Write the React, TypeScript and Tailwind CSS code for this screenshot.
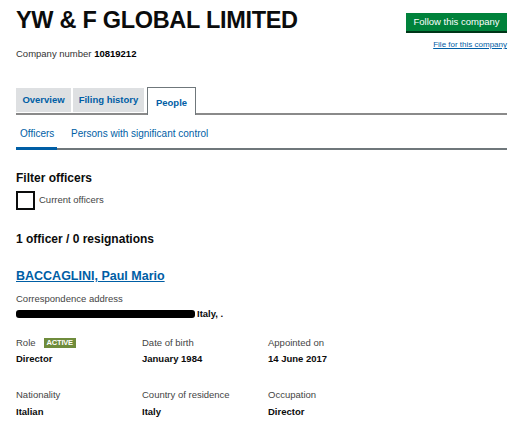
import React from 'react';

const font = { fontFamily: '"Liberation Sans", Arial, sans-serif' };

function Field({ label, value, badge }: { label: string; value: string; badge?: boolean }) {
  return (
    <div className="w-[126px]">
      <div className="flex items-center gap-[8px] h-[12px] text-[9.5px] text-[#444]">
        {label}
        {badge && (
          <span className="bg-[#6f8c3c] text-white text-[7.5px] font-bold px-[3px] leading-[10px] tracking-tight">
            ACTIVE
          </span>
        )}
      </div>
      <div className="mt-[3px] text-[9.5px] font-bold text-[#0b0c0c]">{value}</div>
    </div>
  );
}

export default function App() {
  return (
    <div className="w-[528px] h-[426px] bg-white overflow-hidden text-[#0b0c0c]" style={font}>
      <div className="pl-[16px] pr-[21px]">
        <div className="flex justify-between items-start pt-[6px]">
          <h1 className="text-[23.5px] font-bold leading-[28px] tracking-[-0.3px]">YW &amp; F GLOBAL LIMITED</h1>
          <div className="flex flex-col items-end pt-[7px]">
            <button className="bg-[#00823b] text-white text-[9.5px] w-[101px] h-[20px] border-b-2 border-[#003618] leading-[18px]">
              Follow this company
            </button>
            <a className="mt-[6px] text-[8px] text-[#005ea5] underline">File for this company</a>
          </div>
        </div>
        <div className="mt-[-4px] text-[9.5px] text-[#333]">
          Company number <span className="font-bold text-black">10819212</span>
        </div>

        <div className="mt-[26px] flex items-end gap-[2px] border-b-2 border-[#8a8a8a] h-[28px]">
          <div className="bg-[#dee0e2] h-[24px] w-[55px] flex items-center justify-center text-[9.5px] font-bold text-[#005ea5] mb-[1px]">
            Overview
          </div>
          <div className="bg-[#dee0e2] h-[24px] w-[71px] flex items-center justify-center text-[9.5px] font-bold text-[#005ea5] mb-[1px]">
            Filing history
          </div>
          <div className="bg-white h-[28px] w-[49px] ml-[1px] flex items-center justify-center text-[9.5px] font-bold text-[#005ea5] border border-b-0 border-[#6f777b] mb-[-2px] pt-[2px]">
            People
          </div>
        </div>

        <div className="mt-[11px] flex border-b-2 border-[#6f777b] h-[24px] text-[10px] text-[#005ea5]">
          <div className="w-[41px] pl-[4px] border-b-[3px] border-[#005ea5] mb-[-2px]">Officers</div>
          <div className="ml-[14px]">Persons with significant control</div>
        </div>

        <div className="mt-[20px] text-[12px] font-bold leading-[16px]">Filter officers</div>
        <div className="mt-[5px] flex items-start gap-[4px]">
          <div className="w-[19px] h-[19px] border-2 border-[#0b0c0c]" />
          <span className="text-[9.5px] text-[#444] mt-[2px]">Current officers</span>
        </div>

        <div className="mt-[21px] text-[12px] font-bold leading-[16px]">1 officer / 0 resignations</div>

        <div className="mt-[21px] text-[12.5px] font-bold text-[#005ea5] underline leading-[16px]">
          BACCAGLINI, Paul Mario
        </div>

        <div className="mt-[9px] text-[9.5px] text-[#444] leading-[12px]">Correspondence address</div>
        <div className="mt-[3px] flex items-center text-[9.5px] font-bold leading-[12px]">
          <span className="inline-block w-[179px] h-[8px] bg-black rounded-[3px]" />
          <span className="ml-[2px]">Italy, .</span>
        </div>

        <div className="mt-[17px] flex">
          <Field label="Role" value="Director" badge />
          <Field label="Date of birth" value="January 1984" />
          <Field label="Appointed on" value="14 June 2017" />
        </div>
        <div className="mt-[23px] flex">
          <Field label="Nationality" value="Italian" />
          <Field label="Country of residence" value="Italy" />
          <Field label="Occupation" value="Director" />
        </div>
      </div>
    </div>
  );
}
